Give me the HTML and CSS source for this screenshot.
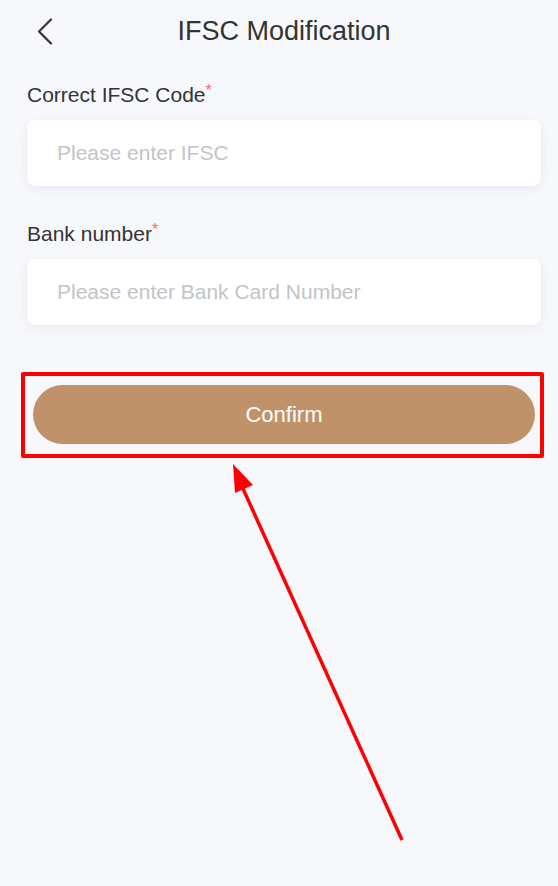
FILE: index.html
```html
<!DOCTYPE html>
<html>
<head>
<meta charset="utf-8">
<link rel="stylesheet" href="styles.css">
</head>
<body>
<div class="page">
  <header class="header">
    <span class="back">
      <svg width="16" height="27" viewBox="0 0 16 27"><path d="M14 1.5 L2 13.5 L14 25.5" fill="none" stroke="#333" stroke-width="2.2" stroke-linecap="round" stroke-linejoin="round"/></svg>
    </span>
    <h1 class="title">IFSC Modification</h1>
  </header>
  <main class="form">
    <div class="field">
      <div class="label">Correct IFSC Code<span class="req">*</span></div>
      <div class="input"><span class="placeholder">Please enter IFSC</span></div>
    </div>
    <div class="field">
      <div class="label">Bank number<span class="req">*</span></div>
      <div class="input"><span class="placeholder">Please enter Bank Card Number</span></div>
    </div>
    <div class="highlight">
      <button class="confirm">Confirm</button>
    </div>
  </main>
  <svg class="arrow" width="558" height="886" viewBox="0 0 558 886">
    <line x1="402" y1="840" x2="240" y2="482" stroke="#ff0000" stroke-width="3.5"/>
    <polygon points="233,464 235,493 253,485" fill="#ff0000"/>
  </svg>
</div>
</body>
</html>
```
FILE: styles.css
```css
html, body {
  margin: 0;
  padding: 0;
}
body {
  background: #f7f8fc;
  font-family: "Liberation Sans", Arial, sans-serif;
  color: #333;
}
.page {
  position: relative;
  width: 558px;
  height: 886px;
  overflow: hidden;
}
.header {
  height: 62px;
  display: flex;
  align-items: center;
  justify-content: center;
  position: relative;
}
.back {
  position: absolute;
  left: 37px;
  top: 18px;
  display: flex;
}
.title {
  margin: 0 0 0 10px;
  font-size: 27px;
  font-weight: normal;
  color: #333;
  line-height: 30px;
}
.form {
  padding: 21px 17px 0 27px;
  display: flex;
  flex-direction: column;
}
.field {
  display: flex;
  flex-direction: column;
}
.field + .field {
  margin-top: 36px;
}
.label {
  font-size: 21px;
  line-height: 24px;
  color: #333;
  margin-bottom: 13px;
}
.req {
  color: #f56c6c;
  font-size: 16px;
  vertical-align: top;
  line-height: 16px;
}
.input {
  height: 66px;
  background: #fff;
  border-radius: 8px;
  box-shadow: 0 3px 10px rgba(40, 50, 80, 0.07);
  display: flex;
  align-items: center;
  padding-left: 30px;
}
.placeholder {
  font-size: 21px;
  color: #c2c4c9;
}
.highlight {
  margin: 47px 0 0 -6px;
  width: 502px;
  border: 4px solid #ff0000;
  border-radius: 2px;
  padding: 9px 5px 0 8px;
  box-sizing: content-box;
  height: 69px;
}
.confirm {
  display: block;
  width: 502px;
  height: 59px;
  border: none;
  border-radius: 30px;
  background: #c0926a;
  color: #fff;
  font-family: "Liberation Sans", Arial, sans-serif;
  font-size: 22px;
  padding: 0;
}
.arrow {
  position: absolute;
  left: 0;
  top: 0;
  pointer-events: none;
}
```
